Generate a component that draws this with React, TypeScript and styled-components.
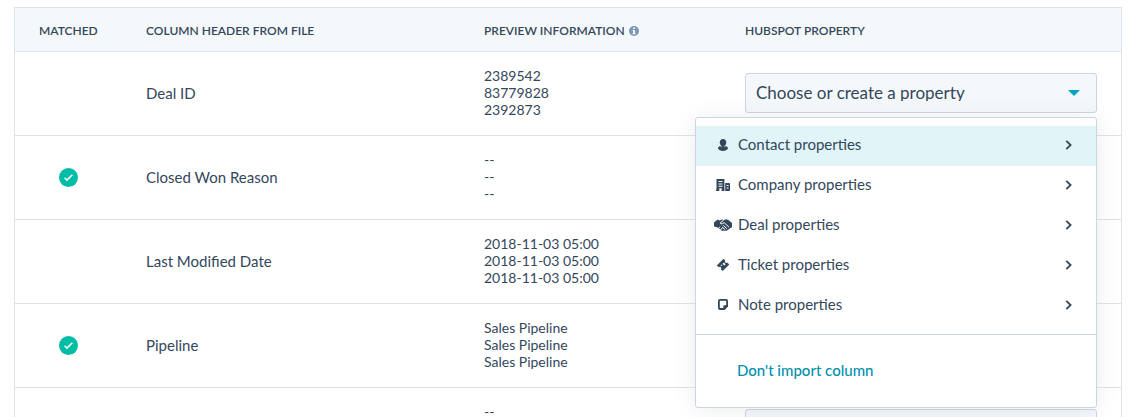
import React, { useState } from 'react';
import styled, { createGlobalStyle } from 'styled-components';

const GlobalStyle = createGlobalStyle`
  *, *::before, *::after { box-sizing: border-box; }
  body {
    margin: 0;
    background: #ffffff;
    color: #33475b;
    font-family: Lato, "Liberation Sans", sans-serif;
    font-size: 14px;
    line-height: 17px;
  }
`;

const Page = styled.main`
  height: 100vh;
  padding: 7px 14px 0;
  overflow: hidden;
`;

const Table = styled.table`
  width: 100%;
  table-layout: fixed;
  border-collapse: separate;
  border-spacing: 0;
  border: 1px solid #dfe3eb;
`;

const Column = styled.col<{ $width: string }>`
  width: ${(p) => p.$width};
`;

const HeaderCell = styled.th`
  height: 44px;
  padding: 2px 24px 0;
  background: #f5f8fa;
  border-bottom: 1px solid #dfe3eb;
  font-size: 12px;
  font-weight: 600;
  text-align: left;
  white-space: nowrap;
`;

const HeaderContent = styled.span`
  display: flex;
  align-items: center;
  gap: 4px;
`;

const Cell = styled.td`
  height: 84px;
  padding: 16px 24px;
  border-bottom: 1px solid #dfe3eb;
  vertical-align: middle;
`;

const NameCell = styled(Cell)`
  font-size: 15px;
`;

const DataCell = styled(Cell)`
  padding: 15px 24px 17px;
`;

const Status = styled.div`
  display: flex;
  justify-content: center;
`;

const PreviewLine = styled.div`
  height: 17px;
`;

const Picker = styled.div`
  position: relative;
`;

const Control = styled.select`
  display: block;
  width: 100%;
  height: 40px;
  padding: 0 40px 0 10px;
  appearance: none;
  background: #f5f8fa;
  border: 1px solid #cbd6e2;
  border-radius: 3px;
  color: #33475b;
  font: inherit;
  font-size: 17px;
  cursor: pointer;
  outline: none;
`;

const Caret = styled.svg`
  position: absolute;
  top: 17px;
  right: 17px;
  pointer-events: none;
`;

const Menu = styled.div`
  position: absolute;
  z-index: 2;
  top: calc(100% + 4px);
  right: 0;
  width: 402px;
  background: #ffffff;
  border: 1px solid #cbd6e2;
  border-radius: 3px;
  box-shadow: 0 1px 24px rgba(0, 0, 0, 0.08);
`;

const MenuGroup = styled.div`
  padding: 8px 0;
  border-bottom: 1px solid #cbd6e2;
`;

const MenuItem = styled.button<{ $active?: boolean }>`
  display: flex;
  align-items: center;
  gap: 6px;
  width: 100%;
  height: 40px;
  padding: 0 24px 2px 18px;
  border: 0;
  background: ${(p) => (p.$active ? '#e1f4f8' : 'transparent')};
  color: inherit;
  font: inherit;
  font-size: 15px;
  text-align: left;
  cursor: pointer;
`;

const ItemIcon = styled.span`
  display: flex;
  justify-content: center;
  width: 18px;
`;

const ItemLabel = styled.span`
  flex: 1;
`;

const MenuFooter = styled.div`
  display: flex;
  align-items: center;
  height: 72px;
  padding: 0 41px;
`;

const FooterAction = styled.button`
  padding: 0;
  border: 0;
  background: none;
  color: #0091ae;
  font: inherit;
  font-size: 15px;
  font-weight: 500;
  cursor: pointer;
`;

const InfoIcon = () => (
  <svg width="10" height="10" viewBox="0 0 10 10" aria-hidden="true">
    <circle cx="5" cy="5" r="5" fill="#7c98b6" />
    <path d="M4.2 1.6h1.700v1.500H4.200zM3.600 4h2.300v3.200h.6v1H3.500v-1h.7V5h-.6z" fill="#fff" />
  </svg>
);

const MatchedIcon = () => (
  <svg width="19" height="19" viewBox="0 0 19 19" role="img" aria-label="Matched">
    <circle cx="9.5" cy="9.5" r="9.5" fill="#00bda5" />
    <path d="M5.600 9.700l2.400 2.400 5.400-5.400" fill="none" stroke="#fff" strokeWidth="1.500" />
  </svg>
);

const ContactIcon = () => (
  <svg width="10" height="12" viewBox="0 0 10 12" fill="currentColor" aria-hidden="true">
    <path d="M5 0c2.100 0 3.200 1.300 3.200 3.200C8.200 5.500 6.900 7.400 5 7.400S1.800 5.500 1.800 3.200C1.800 1.300 2.900 0 5 0z" />
    <path d="M2.200 7C3 8 3.900 8.600 5 8.600S7 8 7.800 7C9.300 7.400 10 8.300 10 9.600 9.200 11.200 7.200 12 5 12S.8 11.200 0 9.600C0 8.300.7 7.400 2.200 7z" />
    <path d="M3.500 6h3v3.500h-3z" />
  </svg>
);

const CompanyIcon = () => (
  <svg width="14" height="12" viewBox="0 0 14 12" fill="currentColor" aria-hidden="true">
    <path
      fillRule="evenodd"
      d="M.5 0h7.900v12H5.700V9.200H3.300V12H0v-1.300h.5zM2.500 2v1h4V2zm0 2.400v1h4v-1zm0 2.400v1h4v-1z"
    />
    <path fillRule="evenodd" d="M9.200 4H13q1 0 1 1v6q0 1-1 1H9.200zM10.600 6v1h2V6zm0 2.400v1h2v-1z" />
  </svg>
);

const DealIcon = () => (
  <svg width="18" height="12" viewBox="0 0 18 12" aria-hidden="true">
    <path
      fill="currentColor"
      d="M0 3.600L3.600.4 5.400 1.600 8.300.4l1.500.6L12.300.2l2.100.9L18 4v4.200l-2 1.100-1.500 1.200-1.500 1-1.800.4-1.700-.4-1.400.4-3-2.400L3 8.200 0 7.400z"
    />
    <path
      fill="none"
      stroke="#fff"
      strokeWidth="1"
      d="M9.800 1L6.200 3.900q.4 1.600 2.300.8l1.700-1 4.800 4.500M4.300 9.700l1.700-2M6.400 11.200l1.800-2.100M9.300 6.400l3.600 3.400M8 7.900l3.300 3"
    />
  </svg>
);

const TicketIcon = () => (
  <svg width="12" height="12" viewBox="0 0 12 12" fill="currentColor" aria-hidden="true">
    <path
      fillRule="evenodd"
      d="M7 .2l1.400 1.400a1.300 1.300 0 0 0 1.900 1.900l1.500 1.500q.4.500 0 1L6.200 11.600q-.5.500-1 0L3.800 10.200a1.300 1.300 0 0 0-2-1.900L.3 6.900q-.5-.5 0-1L6 .2q.5-.4 1 0zM6.900 3.500L5.500 4.900l1.700 1.700L8.600 5.200zM4.300 5.600l-.8.8.8.8.8-.8z"
    />
  </svg>
);

const NoteIcon = () => (
  <svg width="10" height="11" viewBox="0 0 10 11" aria-hidden="true">
    <path
      d="M2 .9h6q1.100 0 1.100 1.100v4.800L6.100 10H2Q.9 10 .9 8.900V2Q.9.900 2 .9z"
      fill="none"
      stroke="currentColor"
      strokeWidth="1.800"
    />
    <path d="M5.400 6.300H10v1L6.600 11H5.400z" fill="currentColor" />
  </svg>
);

const Chevron = () => (
  <svg width="7" height="10" viewBox="0 0 7 10" aria-hidden="true">
    <path d="M1.300.8L5.600 5 1.300 9.200" fill="none" stroke="currentColor" strokeWidth="1.800" />
  </svg>
);

const propertyGroups = [
  { label: 'Contact properties', icon: <ContactIcon /> },
  { label: 'Company properties', icon: <CompanyIcon /> },
  { label: 'Deal properties', icon: <DealIcon /> },
  { label: 'Ticket properties', icon: <TicketIcon /> },
  { label: 'Note properties', icon: <NoteIcon /> },
];

const rows = [
  { name: 'Deal ID', matched: false, preview: ['2389542', '83779828', '2392873'] },
  { name: 'Closed Won Reason', matched: true, preview: ['--', '--', '--'] },
  {
    name: 'Last Modified Date',
    matched: false,
    preview: ['2018-11-03 05:00', '2018-11-03 05:00', '2018-11-03 05:00'],
  },
  {
    name: 'Pipeline',
    matched: true,
    preview: ['Sales Pipeline', 'Sales Pipeline', 'Sales Pipeline'],
  },
  { name: '', matched: false, preview: ['--', '--', '--'] },
];

type PickerProps = { label: string; open: boolean; onToggle: () => void };

function PropertyPicker({ label, open, onToggle }: PickerProps) {
  const [active, setActive] = useState(0);
  return (
    <Picker>
      <Control
        aria-label={label}
        aria-expanded={open}
        onMouseDown={(e) => {
          e.preventDefault();
          onToggle();
        }}
      >
        <option>Choose or create a property</option>
      </Control>
      <Caret width="12" height="6" viewBox="0 0 12 6" aria-hidden="true">
        <path d="M0 0h12L6 6z" fill="#00a4bd" />
      </Caret>
      {open && (
        <Menu role="menu">
          <MenuGroup>
            {propertyGroups.map((group, i) => (
              <MenuItem
                key={group.label}
                type="button"
                role="menuitem"
                $active={i === active}
                onMouseEnter={() => setActive(i)}
              >
                <ItemIcon>{group.icon}</ItemIcon>
                <ItemLabel>{group.label}</ItemLabel>
                <Chevron />
              </MenuItem>
            ))}
          </MenuGroup>
          <MenuFooter>
            <FooterAction type="button" role="menuitem" onClick={onToggle}>
              Don't import column
            </FooterAction>
          </MenuFooter>
        </Menu>
      )}
    </Picker>
  );
}

export default function App() {
  const [openRow, setOpenRow] = useState<number | null>(0);
  return (
    <>
      <GlobalStyle />
      <Page>
        <Table>
          <colgroup>
            <Column $width="107px" />
            <Column $width="338px" />
            <Column $width="261px" />
            <Column $width="auto" />
          </colgroup>
          <thead>
            <tr>
              <HeaderCell scope="col">MATCHED</HeaderCell>
              <HeaderCell scope="col">COLUMN HEADER FROM FILE</HeaderCell>
              <HeaderCell scope="col">
                <HeaderContent>
                  PREVIEW INFORMATION <InfoIcon />
                </HeaderContent>
              </HeaderCell>
              <HeaderCell scope="col">HUBSPOT PROPERTY</HeaderCell>
            </tr>
          </thead>
          <tbody>
            {rows.map((row, i) => (
              <tr key={i}>
                <Cell>
                  <Status>{row.matched && <MatchedIcon />}</Status>
                </Cell>
                <NameCell>{row.name}</NameCell>
                <DataCell>
                  {row.preview.map((line, n) => (
                    <PreviewLine key={n}>{line}</PreviewLine>
                  ))}
                </DataCell>
                <DataCell>
                  <PropertyPicker
                    label={`HubSpot property for ${row.name || 'column'}`}
                    open={openRow === i}
                    onToggle={() => setOpenRow(openRow === i ? null : i)}
                  />
                </DataCell>
              </tr>
            ))}
          </tbody>
        </Table>
      </Page>
    </>
  );
}
